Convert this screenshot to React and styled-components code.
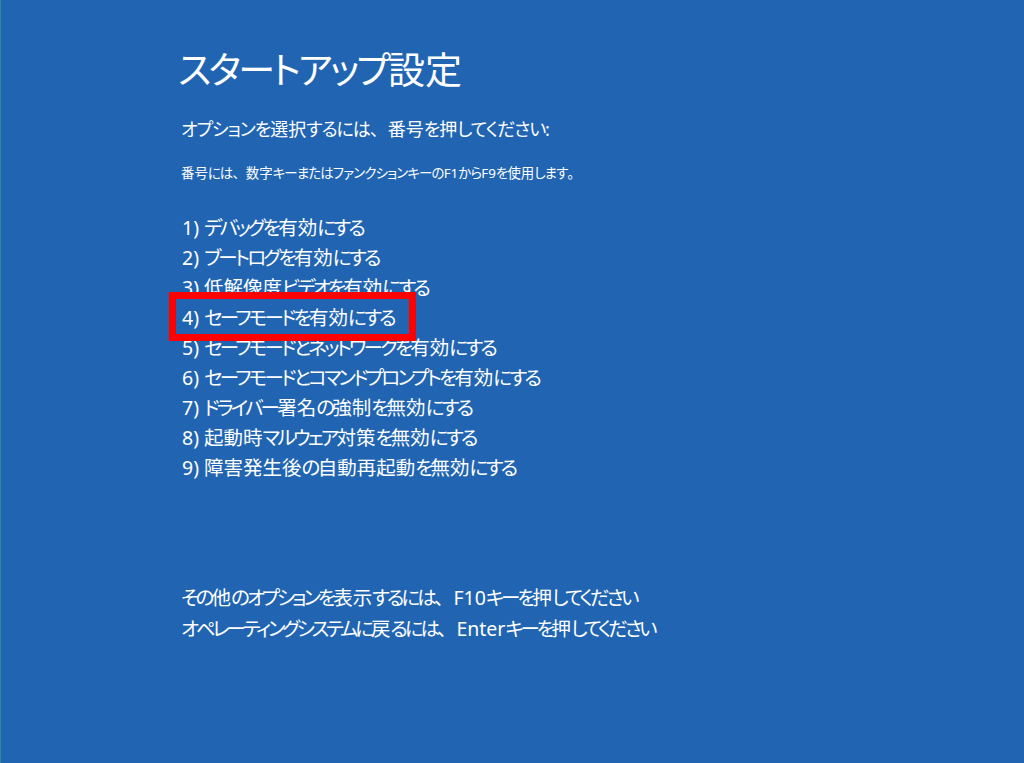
import React from "react";
import styled, { createGlobalStyle } from "styled-components";

const GlobalStyle = createGlobalStyle`
  html, body {
    margin: 0;
    padding: 0;
    height: 100%;
    background: #2165b2;
    overflow: hidden;
  }
  #root {
    height: 100%;
  }
`;

const Screen = styled.div`
  box-sizing: border-box;
  min-height: 100vh;
  background: #2165b2;
  border-left: 1px solid #2c8a94;
  color: #ffffff;
  font-family: "Noto Sans", "Noto Sans CJK JP", sans-serif;
  padding: 44px 0 0 177px;
`;

// kana in the Windows UI font are narrow, so runs of kana get squeezed
const Kana = styled.span`
  font-feature-settings: "palt";
  letter-spacing: ${(p) => p.$squeeze || "-0.06em"};
`;

const jp = (text, squeeze) =>
  text.split(/([\u3040-\u30ff]+)/).map((part, i) =>
    /^[\u3040-\u30ff]+$/.test(part) ? (
      <Kana key={i} $squeeze={squeeze}>
        {part}
      </Kana>
    ) : (
      part
    )
  );

const Title = styled.h1`
  margin: 0;
  font-size: 37px;
  font-weight: 400;
  line-height: 52px;
`;

const Prompt = styled.p`
  margin: 21px 0 0 3px;
  font-size: 18px;
  line-height: 24px;
`;

const Note = styled.p`
  margin: 23px 0 0 3px;
  font-size: 13.4px;
  line-height: 18px;
`;

const OptionList = styled.ol`
  list-style: none;
  margin: 31px 0 0 4px;
  padding: 0;
`;

const Option = styled.li`
  position: relative;
  font-size: 19.5px;
  line-height: 30px;
`;

const Highlight = styled.span`
  position: absolute;
  left: -13px;
  top: -11px;
  width: 247px;
  height: 49px;
  box-sizing: border-box;
  border: 7px solid #ff0000;
  z-index: 2;
  pointer-events: none;
`;

const Footer = styled.div`
  margin: 99px 0 0 3px;
  font-size: 19.5px;
  line-height: 31px;
`;

const options = [
  "デバッグを有効にする",
  "ブートログを有効にする",
  "低解像度ビデオを有効にする",
  "セーフモードを有効にする",
  "セーフモードとネットワークを有効にする",
  "セーフモードとコマンドプロンプトを有効にする",
  "ドライバー署名の強制を無効にする",
  "起動時マルウェア対策を無効にする",
  "障害発生後の自動再起動を無効にする",
];

const App = () => (
  <>
    <GlobalStyle />
    <Screen>
      <Title>{jp("スタートアップ設定", "-0.07em")}</Title>
      <Prompt>{jp("オプションを選択するには、番号を押してください:")}</Prompt>
      <Note>{jp("番号には、数字キーまたはファンクションキーのF1からF9を使用します。")}</Note>
      <OptionList>
        {options.map((label, i) => (
          <Option key={label}>
            {i + 1}) {jp(label, "-0.14em")}
            {i === 3 && <Highlight />}
          </Option>
        ))}
      </OptionList>
      <Footer>
        <div>{jp("その他のオプションを表示するには、F10キーを押してください", "-0.15em")}</div>
        <div>{jp("オペレーティングシステムに戻るには、Enterキーを押してください", "-0.16em")}</div>
      </Footer>
    </Screen>
  </>
);

export default App;
